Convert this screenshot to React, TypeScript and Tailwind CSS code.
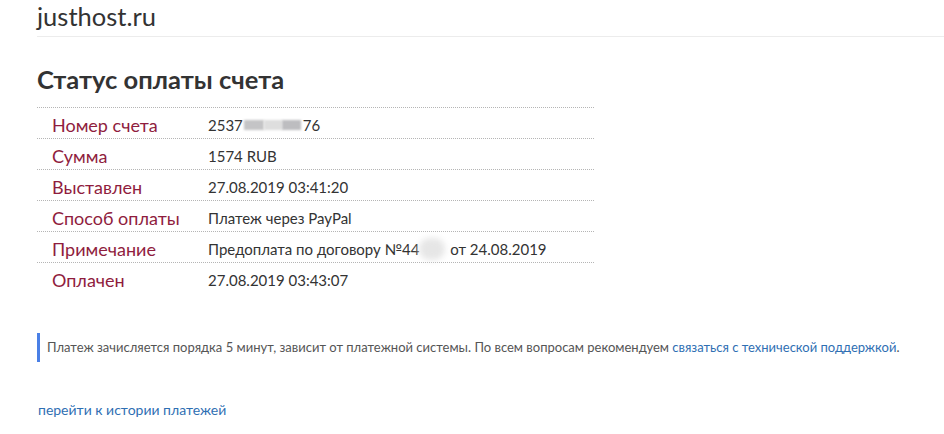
import React from "react";

const rows: { label: string; value: React.ReactNode }[] = [
  {
    label: "Номер счета",
    value: (
      <>
        2537
        <span className="relative inline-block w-[58px] h-[14px] align-[-1px] mx-[1px]">
          <span className="absolute left-0 top-[2px] w-[20px] h-[10px] bg-[#c4c4c6] blur-[1px]" />
          <span className="absolute left-[20px] top-[2px] w-[18px] h-[10px] bg-[#dedede] blur-[1px]" />
          <span className="absolute left-[38px] top-[2px] w-[19px] h-[10px] bg-[#bdbdc0] blur-[1px]" />
        </span>
        76
      </>
    ),
  },
  { label: "Сумма", value: "1574 RUB" },
  { label: "Выставлен", value: "27.08.2019 03:41:20" },
  { label: "Способ оплаты", value: "Платеж через PayPal" },
  {
    label: "Примечание",
    value: (
      <>
        Предоплата по договору №44
        <span className="inline-block w-[26px] h-[22px] align-[-5px] rounded-full bg-[#e6e6e6] blur-[3px] mr-[1px]" />
        {" "}от 24.08.2019
      </>
    ),
  },
  { label: "Оплачен", value: "27.08.2019 03:43:07" },
];

export default function App() {
  return (
    <div className="min-h-[434px] bg-white font-['Lato','Open_Sans',sans-serif] text-[#333]">
      <div className="pl-[37px]">
        <div className="h-[37px] border-b border-[#ececec] flex items-start">
          <span className="text-[25.5px] leading-[32px] text-[#333]">justhost.ru</span>
        </div>
        <h1 className="mt-[26px] text-[25.5px] leading-[32px] font-bold text-[#333]">
          Статус оплаты счета
        </h1>
        <div className="mt-[12px] w-[557px]">
          {rows.map((r, i) => (
            <div
              key={i}
              className="flex items-center h-[31px] border-t border-dotted border-[#b5b5b5]"
            >
              <div className="w-[171px] pl-[15px] text-[18px] text-[#8f1d3e] leading-[22px] pt-[3px]">
                {r.label}
              </div>
              <div className="text-[15px] text-[#333] leading-[20px] pt-[3px]">{r.value}</div>
            </div>
          ))}
        </div>
        <div className="mt-[40px] border-l-[3px] border-[#4a80e6] h-[29px] flex items-center pl-[7px] text-[13px] text-[#555]">
          <span>
            Платеж зачисляется порядка 5 минут, зависит от платежной системы. По всем вопросам
            рекомендуем{" "}
            <a href="#" className="text-[#2f6fb3]">
              связаться с технической поддержкой
            </a>
            .
          </span>
        </div>
        <div className="mt-[37px] text-[14px] pl-[1px]">
          <a href="#" className="text-[#2f6fb3]">
            перейти к истории платежей
          </a>
        </div>
      </div>
    </div>
  );
}
